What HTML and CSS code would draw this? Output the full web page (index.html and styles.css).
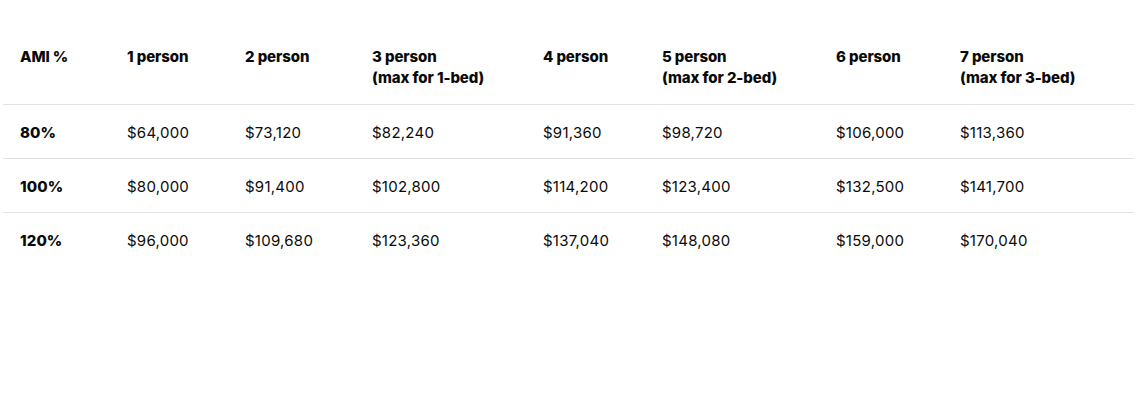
FILE: index.html
```html
<!DOCTYPE html>
<html lang="en">
<head>
<meta charset="utf-8">
<title>AMI income limits</title>
<link rel="stylesheet" href="styles.css">
</head>
<body>
<div class="wrap">
<table class="ami">
<colgroup>
<col class="c0"><col class="c1"><col class="c2"><col class="c3"><col class="c4"><col class="c5"><col class="c6"><col class="c7">
</colgroup>
<thead>
<tr>
<th>AMI %</th>
<th>1 person</th>
<th>2 person</th>
<th>3 person<br>(max for 1-bed)</th>
<th>4 person</th>
<th>5 person<br>(max for 2-bed)</th>
<th>6 person</th>
<th>7 person<br>(max for 3-bed)</th>
</tr>
</thead>
<tbody>
<tr>
<th>80%</th><td>$64,000</td><td>$73,120</td><td>$82,240</td><td>$91,360</td><td>$98,720</td><td>$106,000</td><td>$113,360</td>
</tr>
<tr>
<th>100%</th><td>$80,000</td><td>$91,400</td><td>$102,800</td><td>$114,200</td><td>$123,400</td><td>$132,500</td><td>$141,700</td>
</tr>
<tr>
<th>120%</th><td>$96,000</td><td>$109,680</td><td>$123,360</td><td>$137,040</td><td>$148,080</td><td>$159,000</td><td>$170,040</td>
</tr>
</tbody>
</table>
</div>
</body>
</html>
```

FILE: styles.css
```css
html, body {
  margin: 0;
  padding: 0;
  background: #ffffff;
}

body {
  font-family: Inter, "Noto Sans", "Liberation Sans", sans-serif;
  color: #0a0a0a;
  font-size: 15px;
  line-height: 21px;
}

.wrap {
  padding: 30px 6px 0 3px;
}

.ami {
  width: 1131px;
  border-collapse: collapse;
  table-layout: fixed;
}

.c0 { width: 107px; }
.c1 { width: 118px; }
.c2 { width: 127px; }
.c3 { width: 171px; }
.c4 { width: 119px; }
.c5 { width: 174px; }
.c6 { width: 124px; }
.c7 { width: 191px; }

.ami th,
.ami td {
  text-align: left;
  vertical-align: top;
  padding: 16px 0 16px 17px;
}

.ami thead th {
  font-weight: 800;
  letter-spacing: -0.1px;
  padding-bottom: 16px;
  border-bottom: 1px solid #e2e2e2;
}

.ami tbody th {
  font-weight: 800;
  letter-spacing: 0.1px;
  padding-top: 17px;
  padding-bottom: 15px;
}

.ami td {
  font-weight: 400;
  letter-spacing: 0.25px;
  padding-top: 17px;
  padding-bottom: 15px;
}

.ami tbody tr {
  border-bottom: 1px solid #e2e2e2;
}

.ami tbody tr:last-child {
  border-bottom: none;
}
```
